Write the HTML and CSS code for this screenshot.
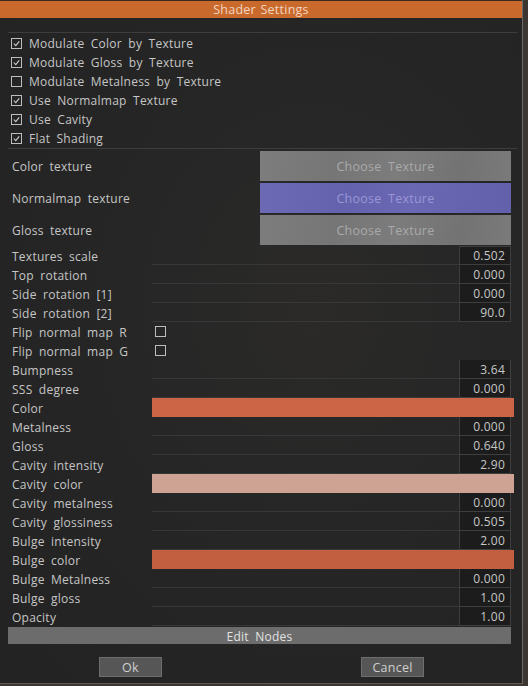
FILE: index.html
```html
<!DOCTYPE html>
<html>
<head>
<meta charset="utf-8">
<link rel="stylesheet" href="styles.css">
</head>
<body>
<div class="dialog">
  <div class="titlebar">Shader Settings</div>
  <div class="content">
    <div class="sep first"></div>
    <div class="checks">
      <div class="check"><span class="box on"><svg viewBox="0 0 10 10"><path d="M2 5 L4.2 7.3 L8 2.6"/></svg></span>Modulate Color by Texture</div>
      <div class="check"><span class="box on"><svg viewBox="0 0 10 10"><path d="M2 5 L4.2 7.3 L8 2.6"/></svg></span>Modulate Gloss by Texture</div>
      <div class="check"><span class="box"></span>Modulate Metalness by Texture</div>
      <div class="check"><span class="box on"><svg viewBox="0 0 10 10"><path d="M2 5 L4.2 7.3 L8 2.6"/></svg></span>Use Normalmap Texture</div>
      <div class="check"><span class="box on"><svg viewBox="0 0 10 10"><path d="M2 5 L4.2 7.3 L8 2.6"/></svg></span>Use Cavity</div>
      <div class="check"><span class="box on"><svg viewBox="0 0 10 10"><path d="M2 5 L4.2 7.3 L8 2.6"/></svg></span>Flat Shading</div>
    </div>
    <div class="sep"></div>
    <div class="textures">
      <div class="tex-row"><span class="label">Color texture</span><div class="tex-btn grey">Choose Texture</div></div>
      <div class="tex-row"><span class="label">Normalmap texture</span><div class="tex-btn blue">Choose Texture</div></div>
      <div class="tex-row"><span class="label">Gloss texture</span><div class="tex-btn grey">Choose Texture</div></div>
    </div>
    <div class="params">
      <div class="row"><span class="label">Textures scale</span><div class="track"></div><div class="val">0.502</div></div>
      <div class="row"><span class="label">Top rotation</span><div class="track"></div><div class="val">0.000</div></div>
      <div class="row"><span class="label">Side rotation [1]</span><div class="track"></div><div class="val">0.000</div></div>
      <div class="row"><span class="label">Side rotation [2]</span><div class="track"></div><div class="val">90.0</div></div>
      <div class="row"><span class="label">Flip normal map R</span><div class="flip"><span class="box"></span></div></div>
      <div class="row"><span class="label">Flip normal map G</span><div class="flip"><span class="box"></span></div></div>
      <div class="row"><span class="label">Bumpness</span><div class="track"></div><div class="val">3.64</div></div>
      <div class="row"><span class="label">SSS degree</span><div class="track"></div><div class="val">0.000</div></div>
      <div class="row"><span class="label">Color</span><div class="swatch color"></div></div>
      <div class="row"><span class="label">Metalness</span><div class="track"></div><div class="val">0.000</div></div>
      <div class="row"><span class="label">Gloss</span><div class="track"></div><div class="val">0.640</div></div>
      <div class="row"><span class="label">Cavity intensity</span><div class="track"></div><div class="val">2.90</div></div>
      <div class="row"><span class="label">Cavity color</span><div class="swatch cavity"></div></div>
      <div class="row"><span class="label">Cavity metalness</span><div class="track"></div><div class="val">0.000</div></div>
      <div class="row"><span class="label">Cavity glossiness</span><div class="track"></div><div class="val">0.505</div></div>
      <div class="row"><span class="label">Bulge intensity</span><div class="track"></div><div class="val">2.00</div></div>
      <div class="row"><span class="label">Bulge color</span><div class="swatch bulge"></div></div>
      <div class="row"><span class="label">Bulge Metalness</span><div class="track"></div><div class="val">0.000</div></div>
      <div class="row"><span class="label">Bulge gloss</span><div class="track"></div><div class="val">1.00</div></div>
      <div class="row"><span class="label">Opacity</span><div class="track"></div><div class="val">1.00</div></div>
    </div>
    <div class="edit-nodes">Edit Nodes</div>
    <div class="buttons">
      <div class="btn">Ok</div>
      <div class="btn">Cancel</div>
    </div>
  </div>
</div>
</body>
</html>
```

FILE: styles.css
```css
html, body {
  margin: 0;
  padding: 0;
}
body {
  width: 528px;
  height: 686px;
  background: #3b3632;
  font-family: "Open Sans", "Noto Sans", sans-serif;
  font-size: 12px;
  color: #c6c6c6;
  word-spacing: 3px;
  letter-spacing: 0.25px;
  overflow: hidden;
}
.dialog {
  width: 522px;
  height: 683px;
  background: #252525;
  background-image: radial-gradient(ellipse at 60% 45%, #2b2a29 0%, #252525 55%, #232323 100%);
  border-right: 1px solid #6d6863;
  border-bottom: 1px solid #5e5a56;
  display: flex;
  flex-direction: column;
}
.titlebar {
  height: 17px;
  border-top: 1px solid #3a2a1e;
  background: #c9692c;
  color: #f2d6c0;
  text-align: center;
  line-height: 17px;
  font-size: 12.5px;
  word-spacing: 1px;
}
.content {
  padding: 0 8px;
  display: flex;
  flex-direction: column;
}
.sep {
  height: 1px;
  background: #3d3d3d;
  margin-right: -3px;
}
.sep.first {
  margin-top: 14px;
}
.checks {
  display: flex;
  flex-direction: column;
  padding-top: 1px;
}
.check {
  height: 19px;
  display: flex;
  align-items: center;
  padding-left: 3px;
}
.box {
  width: 9px;
  height: 9px;
  border: 1px solid #bdbdbd;
  margin-right: 7px;
  display: inline-flex;
  flex: none;
}
.box svg {
  width: 9px;
  height: 9px;
}
.box svg path {
  fill: none;
  stroke: #d0d0d0;
  stroke-width: 1.2;
}
.textures {
  display: flex;
  flex-direction: column;
  gap: 2px;
  margin-top: 2px;
  margin-bottom: 1px;
}
.tex-row {
  height: 30px;
  display: flex;
  align-items: center;
  margin-right: 3px;
}
.label {
  width: 140px;
  padding-left: 4px;
  padding-top: 2px;
  flex: none;
  white-space: nowrap;
}
.tex-row .label {
  width: 248px;
  padding-top: 0;
}
.tex-btn {
  flex: 1;
  height: 30px;
  line-height: 32px;
  text-align: center;
  font-size: 12.5px;
}
.tex-btn.grey {
  background: #7a7a7a;
  background-image: linear-gradient(100deg, #7d7d7d 0%, #767676 30%, #7c7c7c 55%, #737373 80%, #7a7a7a 100%);
  color: #a9a9a9;
}
.tex-btn.blue {
  background: #6966b2;
  background-image: linear-gradient(100deg, #6c69b5 0%, #6562ad 35%, #6a67b3 60%, #6360ab 100%);
  color: #9996d6;
}
.params {
  display: flex;
  flex-direction: column;
}
.row {
  height: 19px;
  display: flex;
  align-items: center;
}
.track {
  flex: 1;
  align-self: stretch;
  border-bottom: 1px solid #373737;
  box-sizing: border-box;
}
.val {
  width: 52px;
  height: 19px;
  box-sizing: border-box;
  border: 1px solid #3e3e3e;
  border-top: none;
  background: #1c1c1c;
  text-align: right;
  padding-right: 5px;
  padding-top: 1px;
  line-height: 17px;
  word-spacing: 0;
  margin-right: 3px;
}
.row:first-child .val {
  border-top: 1px solid #3e3e3e;
  padding-top: 1px;
  line-height: 16px;
}
.flip {
  flex: 1;
  display: flex;
  align-items: center;
  padding-left: 3px;
}
.swatch {
  flex: 1;
  height: 19px;
}
.swatch.color { background: #cc6546; }
.swatch.cavity { background: #cfa393; }
.swatch.bulge { background: #c25f40; }
.edit-nodes {
  margin-top: 1px;
  margin-right: 3px;
  height: 17px;
  background: #6c6c6c;
  color: #e2e2e2;
  text-align: center;
  line-height: 19px;
}
.buttons {
  display: flex;
  padding-top: 13px;
}
.btn {
  width: 61px;
  height: 18px;
  border: 1px solid #6e6e6e;
  background: #565656;
  color: #cfcfcf;
  text-align: center;
  line-height: 20px;
  font-size: 12.5px;
}
.btn:first-child {
  margin-left: 91px;
}
.btn:last-child {
  margin-left: 199px;
}
```
